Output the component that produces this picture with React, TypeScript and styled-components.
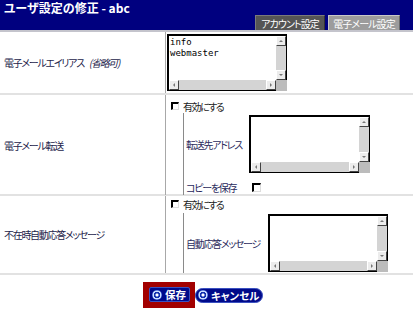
import React from 'react';
import styled, { createGlobalStyle } from 'styled-components';

const Global = createGlobalStyle`
  html, body { margin: 0; padding: 0; background: #fff; }
  body {
    font-family: "Noto Sans CJK JP", "Noto Sans", sans-serif;
    font-feature-settings: "palt";
  }
`;

const Page = styled.div`
  width: 413px;
  height: 310px;
  overflow: hidden;
  display: flex;
  flex-direction: column;
`;

const Header = styled.header`
  height: 30px;
  background: #00007f;
  border-bottom: 2px solid #c4c4cc;
  display: flex;
  flex-direction: column;
  justify-content: space-between;
`;

const Title = styled.h1`
  margin: 0;
  padding: 1px 0 0 4px;
  font-size: 12px;
  line-height: 14px;
  font-weight: bold;
  color: #fff;
  white-space: nowrap;
`;

const Tabs = styled.nav`
  align-self: flex-end;
  display: flex;
  gap: 3px;
  padding-right: 13px;
  margin-bottom: 1px;
`;

const Tab = styled.div<{ $active?: boolean; $w: number }>`
  width: ${(p) => p.$w}px;
  height: 15px;
  box-sizing: border-box;
  display: flex;
  align-items: center;
  justify-content: center;
  font-size: 10px;
  letter-spacing: -0.9px;
  color: #fff;
  white-space: nowrap;
  background: ${(p) => (p.$active ? '#9c9c9c' : '#555555')};
  border-top: 1px solid ${(p) => (p.$active ? '#c8c8c8' : '#7a7a7a')};
  border-left: 1px solid ${(p) => (p.$active ? '#c8c8c8' : '#7a7a7a')};
  border-right: 1px solid ${(p) => (p.$active ? '#6a6a6a' : '#333')};
`;

const Row = styled.div<{ $h: number }>`
  display: grid;
  grid-template-columns: 165px 1fr;
  height: ${(p) => p.$h}px;
  border-bottom: 2px solid #e2e2e2;
`;

const LabelCell = styled.div`
  display: flex;
  align-items: center;
  padding-left: 4px;
  font-size: 10px;
  letter-spacing: -1.3px;
  color: #23234a;
  white-space: nowrap;
`;

const Note = styled.i`
  margin-left: 5px;
  font-style: italic;
`;

const ValueCell = styled.div<{ $pad: string }>`
  border-left: 1px solid #a8a8a8;
  padding: ${(p) => p.$pad};
  display: flex;
  flex-direction: column;
  align-items: flex-start;
`;

const CheckLine = styled.label<{ $mt: number }>`
  display: flex;
  align-items: center;
  gap: 4px;
  height: 14px;
  margin-top: ${(p) => p.$mt}px;
  font-size: 10px;
  letter-spacing: -1.5px;
  color: #222;
  white-space: nowrap;
`;

const Check = styled.span`
  width: 8px;
  height: 8px;
  box-sizing: border-box;
  background: #fff;
  border-top: 2px solid #000;
  border-left: 2px solid #000;
  border-right: 1px solid #ddd;
  border-bottom: 1px solid #ddd;
  display: inline-block;
  flex: none;
`;

const SubBlock = styled.div<{ $mt: number }>`
  flex: 1;
  align-self: stretch;
  margin-left: 12px;
  margin-top: ${(p) => p.$mt}px;
  border-left: 1px solid #8a8a8a;
  padding-left: 1px;
  display: flex;
  flex-direction: column;
`;

const SubRow = styled.div<{ $lw: number; $pt: number }>`
  display: grid;
  grid-template-columns: ${(p) => p.$lw}px auto;
  align-items: center;
  padding-top: ${(p) => p.$pt}px;
`;

const SubLabel = styled.span`
  padding-left: 1px;
  font-size: 10px;
  letter-spacing: -1.3px;
  color: #2a2a5c;
  white-space: nowrap;
`;

const CopyRow = styled.div<{ $lw: number }>`
  display: grid;
  grid-template-columns: ${(p) => p.$lw}px auto;
  align-items: center;
  height: 16px;
  margin-top: 6px;
`;

const CopyCheck = styled(Check)`
  margin-left: 3px;
  width: 9px;
  height: 9px;
`;

const TAFrame = styled.div<{ $w: number; $h: number }>`
  width: ${(p) => p.$w}px;
  height: ${(p) => p.$h}px;
  box-sizing: border-box;
  display: grid;
  grid-template-columns: 1fr 11px;
  grid-template-rows: 1fr 11px;
  border-top: 2px solid #000;
  border-left: 2px solid #000;
  background: #fff;
`;

const TAText = styled.div`
  grid-column: 1;
  grid-row: 1;
  padding: 1px 0 0 1px;
  font-family: "DejaVu Sans Mono", "Liberation Mono", monospace;
  font-size: 9px;
  line-height: 11px;
  color: #000;
  white-space: pre;
  overflow: hidden;
`;

const VBar = styled.div`
  grid-column: 2;
  grid-row: 1;
  display: flex;
  flex-direction: column;
  background: #d4d4d4;
  border-right: 1px solid #000;
`;

const HBar = styled.div`
  grid-column: 1;
  grid-row: 2;
  display: flex;
  background: #d4d4d4;
  border-bottom: 1px solid #000;
`;

const Corner = styled.div`
  grid-column: 2;
  grid-row: 2;
  background: #bcbcbc;
`;

const Track = styled.div`
  flex: 1;
`;

const tri: Record<string, string> = {
  up: 'border-left:2px solid transparent;border-right:2px solid transparent;border-bottom:2px solid #777;',
  down: 'border-left:2px solid transparent;border-right:2px solid transparent;border-top:2px solid #777;',
  left: 'border-top:2px solid transparent;border-bottom:2px solid transparent;border-right:2px solid #777;',
  right: 'border-top:2px solid transparent;border-bottom:2px solid transparent;border-left:2px solid #777;',
};

const Arrow = styled.div<{ $dir: 'up' | 'down' | 'left' | 'right' }>`
  width: 10px;
  height: 10px;
  box-sizing: border-box;
  flex: none;
  background: #ececec;
  border: 1px solid;
  border-color: #fff #444 #444 #fff;
  display: flex;
  align-items: center;
  justify-content: center;
  &::after {
    content: '';
    width: 0;
    height: 0;
    ${(p) => tri[p.$dir]}
  }
`;

const TextArea: React.FC<{ w: number; h: number; text?: string }> = ({ w, h, text }) => (
  <TAFrame $w={w} $h={h}>
    <TAText>{text}</TAText>
    <VBar>
      <Arrow $dir="up" />
      <Track />
      <Arrow $dir="down" />
    </VBar>
    <HBar>
      <Arrow $dir="left" />
      <Track />
      <Arrow $dir="right" />
    </HBar>
    <Corner />
  </TAFrame>
);

const Footer = styled.footer`
  display: flex;
  justify-content: center;
  align-items: center;
  padding: 7px 7px 0 0;
`;

const Focus = styled.div`
  background: #a20000;
  padding: 5px 5px 6px 6px;
  display: flex;
`;

const Btn = styled.button<{ $pill?: boolean; $w: number }>`
  width: ${(p) => p.$w}px;
  height: 15px;
  box-sizing: border-box;
  margin: 0;
  padding: 0 0 0 2px;
  display: flex;
  align-items: center;
  gap: 3px;
  background: #000a8a;
  border: 1px solid #3a50c0;
  border-radius: ${(p) => (p.$pill ? '8px' : '2px')};
  color: #fff;
  font-family: "Noto Sans CJK JP", sans-serif;
  font-feature-settings: "palt";
  font-size: 10.5px;
  font-weight: bold;
  white-space: nowrap;
`;

const BtnIcon = styled.span`
  width: 10px;
  height: 10px;
  border-radius: 50%;
  flex: none;
  background: radial-gradient(circle, #ffffff 0 1.3px, #1030b0 1.8px 3px, #cfe0ff 3.5px 4.2px, #5a7ee0 4.6px);
`;

export default function App() {
  return (
    <Page>
      <Global />
      <Header>
        <Title>ユーザ設定の修正 - abc</Title>
        <Tabs>
          <Tab $w={70}>アカウント設定</Tab>
          <Tab $w={72} $active>
            電子メール設定
          </Tab>
        </Tabs>
      </Header>

      <Row $h={61}>
        <LabelCell>
          電子メールエイリアス<Note>(省略可)</Note>
        </LabelCell>
        <ValueCell $pad="2px 0 0 1px">
          <TextArea w={120} h={57} text={'info\nwebmaster'} />
        </ValueCell>
      </Row>

      <Row $h={99}>
        <LabelCell>電子メール転送</LabelCell>
        <ValueCell $pad="0 0 0 5px">
          <CheckLine $mt={4}>
            <Check />
            有効にする
          </CheckLine>
          <SubBlock $mt={0}>
            <SubRow $lw={64} $pt={2}>
              <SubLabel>転送先アドレス</SubLabel>
              <TextArea w={121} h={58} />
            </SubRow>
            <CopyRow $lw={64}>
              <SubLabel>コピーを保存</SubLabel>
              <CopyCheck />
            </CopyRow>
          </SubBlock>
        </ValueCell>
      </Row>

      <Row $h={77}>
        <LabelCell>不在時自動応答メッセージ</LabelCell>
        <ValueCell $pad="0 0 0 5px">
          <CheckLine $mt={1}>
            <Check />
            有効にする
          </CheckLine>
          <SubBlock $mt={2}>
            <SubRow $lw={83} $pt={1}>
              <SubLabel>自動応答メッセージ</SubLabel>
              <TextArea w={120} h={58} />
            </SubRow>
          </SubBlock>
        </ValueCell>
      </Row>

      <Footer>
        <Focus>
          <Btn $w={41}>
            <BtnIcon />
            保存
          </Btn>
        </Focus>
        <Btn $pill $w={68}>
          <BtnIcon />
          キャンセル
        </Btn>
      </Footer>
    </Page>
  );
}
